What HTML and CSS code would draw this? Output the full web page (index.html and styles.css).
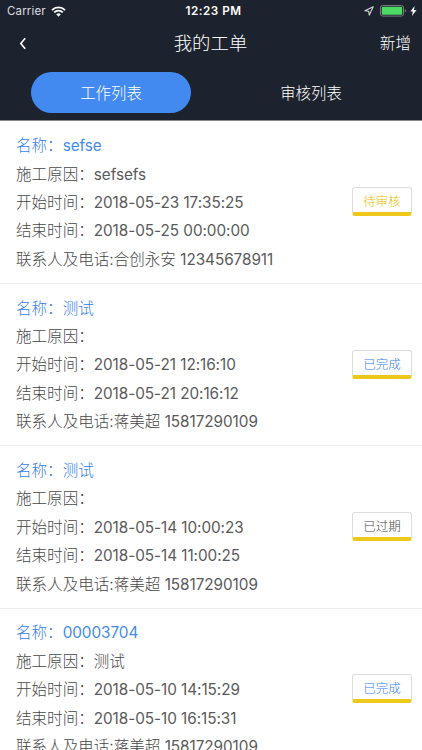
FILE: index.html
```html
<!DOCTYPE html>
<html lang="zh-CN">
<head>
  <meta charset="UTF-8">
  <meta name="viewport" content="width=device-width, initial-scale=1">
  <title>我的工单</title>
  <link rel="stylesheet" href="styles.css">
</head>
<body>
  <header class="header">
    <!-- Status bar -->
    <div class="status-bar">
      <div class="status-left">
        <span class="carrier">Carrier</span>
        <svg class="wifi" width="15" height="11" viewBox="0 0 15 11">
          <path d="M1 4.1a9.2 9.2 0 0 1 13 0M3.2 6.4a6.1 6.1 0 0 1 8.6 0" fill="none" stroke="#fff" stroke-width="1.8"/>
          <path d="M5.2 8.3a3.3 3.3 0 0 1 4.6 0L7.5 10.7z" fill="#fff"/>
        </svg>
      </div>
      <span class="clock">12:23 PM</span>
      <div class="status-right">
        <svg width="10" height="10" viewBox="0 0 10 10">
          <path d="M9.2.8L.9 4.7l3.8.6.6 3.8z" fill="none" stroke="#d4d6d9" stroke-width="1.1" stroke-linejoin="round"/>
        </svg>
        <svg class="battery" width="27" height="12" viewBox="0 0 27 12">
          <rect x=".5" y=".5" width="23" height="10.6" rx="2.2" fill="none" stroke="#777b82"/>
          <rect x="1.8" y="1.8" width="20.4" height="8" rx="1" fill="#4cd964"/>
          <path d="M24.8 4v3.6q1.3-.5 1.3-1.8T24.8 4z" fill="#777b82"/>
        </svg>
        <svg width="7" height="10" viewBox="0 0 7 10">
          <path d="M4.6 0L.4 5.6h2.5L1.9 10 6.6 4.1H4z" fill="#fff"/>
        </svg>
      </div>
    </div>

    <!-- Navigation -->
    <div class="nav">
      <svg class="back" width="8" height="13" viewBox="0 0 8 13">
        <path d="M6.2 1.2L1.8 6.5l4.4 5.3" fill="none" stroke="#fff" stroke-width="1.6"/>
      </svg>
      <h1 class="title">我的工单</h1>
      <a class="add">新增</a>
    </div>

    <!-- Tabs -->
    <div class="tabs">
      <div class="tab active">工作列表</div>
      <div class="tab">审核列表</div>
    </div>
  </header>

  <main class="list">
    <div class="item">
      <div class="info">
        <p class="name">名称：<span class="value">sefse</span></p>
        <p>施工原因：<span class="value">sefsefs</span></p>
        <p>开始时间：<span class="value">2018-05-23 17:35:25</span></p>
        <p>结束时间：<span class="value">2018-05-25 00:00:00</span></p>
        <p>联系人及电话:合创永安 <span class="value">12345678911</span></p>
      </div>
      <div class="status pending">待审核</div>
    </div>

    <div class="item">
      <div class="info">
        <p class="name">名称：测试</p>
        <p>施工原因：</p>
        <p>开始时间：<span class="value">2018-05-21 12:16:10</span></p>
        <p>结束时间：<span class="value">2018-05-21 20:16:12</span></p>
        <p>联系人及电话:蒋美超 <span class="value">15817290109</span></p>
      </div>
      <div class="status done">已完成</div>
    </div>

    <div class="item">
      <div class="info">
        <p class="name">名称：测试</p>
        <p>施工原因：</p>
        <p>开始时间：<span class="value">2018-05-14 10:00:23</span></p>
        <p>结束时间：<span class="value">2018-05-14 11:00:25</span></p>
        <p>联系人及电话:蒋美超 <span class="value">15817290109</span></p>
      </div>
      <div class="status expired">已过期</div>
    </div>

    <div class="item">
      <div class="info">
        <p class="name">名称：<span class="value">00003704</span></p>
        <p>施工原因：测试</p>
        <p>开始时间：<span class="value">2018-05-10 14:15:29</span></p>
        <p>结束时间：<span class="value">2018-05-10 16:15:31</span></p>
        <p>联系人及电话:蒋美超 <span class="value">15817290109</span></p>
      </div>
      <div class="status done">已完成</div>
    </div>
  </main>
</body>
</html>
```
FILE: styles.css
```css
* {
  box-sizing: border-box;
}
body {
  margin: 0;
  height: 750px;
  overflow: hidden;
  background: #fff;
  color: #484848;
  font-family: Inter, "Noto Sans CJK SC", sans-serif;
  font-weight: 300;
}
h1, p {
  margin: 0;
  font-weight: 300;
}
svg {
  display: block;
}
.header {
  height: 121px;
  background: #1d232e;
  border-bottom: 1px solid #85888e;
  color: #fff;
}

/* Status bar */
.status-bar {
  display: grid;
  grid-template-columns: 1fr auto 1fr;
  align-items: center;
  height: 22px;
  padding: 0 5px 0 7px;
  font-size: 12px;
}
.status-left, .status-right {
  display: flex;
  align-items: center;
}
.status-left {
  gap: 5px;
}
.carrier {
  color: #dcdde0;
  font-size: 11.5px;
  font-weight: 400;
  letter-spacing: 0.15px;
}
.clock {
  padding-left: 3px;
  font-size: 11.7px;
  font-weight: 600;
  letter-spacing: 0.5px;
}
.status-right {
  justify-content: flex-end;
  gap: 4px;
}
.battery {
  margin: 0 -1px 0 2px;
}

/* Navigation */
.nav {
  display: grid;
  grid-template-columns: 1fr auto 1fr;
  align-items: center;
  height: 43px;
  padding: 0 11px 0 19px;
}
.title {
  padding: 0 9px 3px 0;
  font-size: 18.4px;
}
.add {
  justify-self: end;
  padding-bottom: 3px;
  font-size: 15.6px;
}

/* Tabs */
.tabs {
  display: grid;
  grid-template-columns: 160px 160px;
  justify-content: space-between;
  padding: 7px 31px 0;
}
.tab {
  height: 41px;
  border-radius: 21px;
  font-size: 15.4px;
  line-height: 44px;
  text-align: center;
}
.tab.active {
  background: #438af0;
}

/* Work orders */
.list {
  padding-top: 0.6px;
}
.item {
  display: flex;
  justify-content: space-between;
  align-items: center;
  height: 162.4px;
  padding: 0 10px 0 16px;
  border-bottom: 1px solid #eee;
}
.info {
  padding-top: 2px;
  font-size: 15.55px;
  line-height: 28.4px;
  white-space: nowrap;
}
.info p {
  color: #484848;
}
.info .value {
  color: #5a5a5a;
  font-size: 15.3px;
  font-weight: 400;
  letter-spacing: -0.05px;
}
.info .name {
  color: #3580ee;
}
.info .name .value {
  color: #438af0;
}
.status {
  width: 60px;
  height: 29px;
  margin-bottom: 1px;
  border: 1px solid #ddd;
  border-bottom: 4px solid #edc81a;
  border-radius: 3px;
  font-size: 12.5px;
  line-height: 27px;
  text-align: center;
}
.pending {
  color: #e8be00;
}
.done {
  color: #3580ee;
}
.expired {
  color: #484848;
}
```
